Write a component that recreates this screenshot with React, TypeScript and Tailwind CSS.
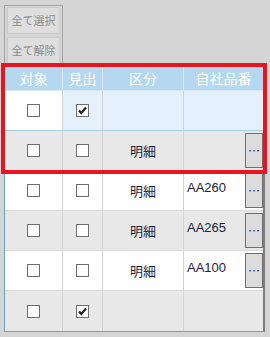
import React from "react";

type Row = {
  target: boolean;
  head: boolean;
  kind?: string;
  code?: string;
  button: boolean;
  tone: "new" | "white" | "gray";
};

const rows: Row[] = [
  { target: false, head: true, button: false, tone: "new" },
  { target: false, head: false, kind: "明細", button: true, tone: "gray" },
  { target: false, head: false, kind: "明細", code: "AA260", button: true, tone: "white" },
  { target: false, head: false, kind: "明細", code: "AA265", button: true, tone: "gray" },
  { target: false, head: false, kind: "明細", code: "AA100", button: true, tone: "white" },
  { target: false, head: true, button: false, tone: "gray" },
];

function Check({ on }: { on: boolean }) {
  return (
    <span className="flex h-[13px] w-[13px] items-center justify-center border border-[#6e6e6e] bg-white">
      {on && (
        <svg width="11" height="11" viewBox="0 0 11 11">
          <path d="M2 5.5 L4.3 8 L9 2.5" fill="none" stroke="#222" strokeWidth="2.2" />
        </svg>
      )}
    </span>
  );
}

export default function App() {
  const jp = { fontFamily: '"Noto Sans CJK JP", "Noto Sans", sans-serif' };
  return (
    <div className="relative h-[337px] w-[270px] overflow-hidden bg-[#d5d5d5]" style={jp}>
      {/* select / clear panel */}
      <div className="ml-[4px] mt-[5px] flex w-[59px] flex-col gap-[3px] border border-b-0 border-[#a4a4a4] px-[2px] pt-[1px]">
        {["全て選択", "全て解除"].map((label) => (
          <div
            key={label}
            className="flex h-[27px] items-center justify-center rounded-[1px] border border-[#c9c9c9] bg-[#dedede] text-[11px] leading-none text-[#8a8a8a]"
          >
            {label}
          </div>
        ))}
      </div>

      {/* grid */}
      <div className="ml-[4px] mt-[2px] w-[261px] border-b border-l border-r-2 border-b-[#6d9cc7] border-l-[#6d9cc7] border-r-[#7d7d7d]">
        <div className="flex h-[25px] border-b border-[#d6e8f5] bg-[#b4d8ef] text-[14px] leading-none text-white">
          <div className="flex w-[58px] items-center justify-center border-r border-[#dcebf6]">対象</div>
          <div className="flex w-[40px] items-center justify-center border-r border-[#dcebf6]">見出</div>
          <div className="flex w-[81px] items-center justify-center border-r border-[#dcebf6]">区分</div>
          <div className="flex flex-1 items-center justify-center">自社品番</div>
        </div>
        {rows.map((r, i) => {
          const bg = r.tone === "gray" ? "bg-[#e8e8e8]" : r.tone === "new" ? "bg-[#e4f0fb]" : "bg-white";
          const first = r.tone === "new" ? "bg-white" : bg;
          const line = r.tone === "new" ? "border-b-[#a9cfe0]" : "border-b-[#d9d9d9]";
          return (
            <div key={i} className={`flex h-[40px] border-b ${line} ${i === rows.length - 1 ? "border-b-0 h-[39px]" : ""}`}>
              <div className={`flex w-[58px] items-center justify-center border-r border-[#d3d3d3] ${first}`}>
                <Check on={r.target} />
              </div>
              <div className={`flex w-[40px] items-center justify-center border-r border-[#d3d3d3] ${bg}`}>
                <Check on={r.head} />
              </div>
              <div
                className={`flex w-[81px] items-center justify-center border-r border-[#d3d3d3] text-[13px] text-[#1e1e3c] ${bg}`}
              >
                {r.kind}
              </div>
              <div
                className={`flex-1 pl-[3px] pt-[9px] text-[13px] leading-[15px] text-[#1e1e3c] ${bg}`}
                style={{ fontFamily: '"Liberation Sans", Arial, sans-serif' }}
              >
                {r.code}
              </div>
              {r.button && (
                <div className={`flex w-[18px] items-center py-[2px] ${bg}`}>
                  <div className="flex h-full w-full items-center justify-center border border-[#6e6e6e] bg-[#dcdcdc] text-[12px] leading-none text-[#1e1e3c]">
                    …
                  </div>
                </div>
              )}
            </div>
          );
        })}
      </div>

      {/* annotation */}
      <div className="absolute left-[1px] top-[63px] h-[111px] w-[266px] border-[4px] border-[#e8141f]" />
    </div>
  );
}
